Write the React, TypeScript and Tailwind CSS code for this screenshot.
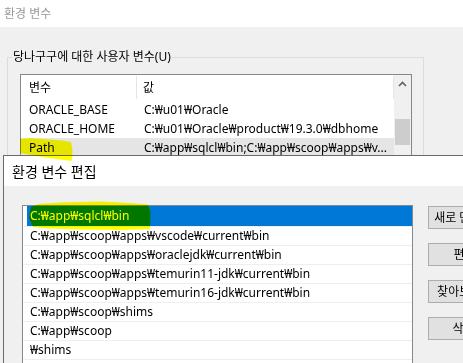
import React from "react";

const font = "font-['Noto_Sans','Noto_Sans_CJK_KR',sans-serif]";

const userVars = [
  { name: "ORACLE_BASE", value: "C:₩u01₩Oracle" },
  { name: "ORACLE_HOME", value: "C:₩u01₩Oracle₩product₩19.3.0₩dbhome" },
  { name: "Path", value: "C:₩app₩sqlcl₩bin;C:₩app₩scoop₩apps₩v...", selected: true },
];

const paths = [
  "C:₩app₩sqlcl₩bin",
  "C:₩app₩scoop₩apps₩vscode₩current₩bin",
  "C:₩app₩scoop₩apps₩oraclejdk₩current₩bin",
  "C:₩app₩scoop₩apps₩temurin11-jdk₩current₩bin",
  "C:₩app₩scoop₩apps₩temurin16-jdk₩current₩bin",
  "C:₩app₩scoop₩shims",
  "C:₩app₩scoop",
  "₩shims",
];

const buttons = ["새로 만들기(N)", "편집(E)", "찾아보기(B)...", "삭제(D)"];

function Highlights() {
  // 형광펜 자국 (multiply)
  return (
    <svg
      className="absolute left-0 top-0 pointer-events-none mix-blend-multiply"
      width="463"
      height="363"
    >
      <path
        d="M20 139 L30 138 L48 139.5 L62 140.5 L71 142 L72.5 150 L72 161 L60 159.5 L45 157.5 L32 155 L20 153 Z"
        fill="#ffff00"
      />
      <path
        d="M31 207 L38 204 L60 202.5 L100 201.5 L130 203 L148 204.5 L150.5 212 L150 229 L120 230 L80 229.5 L48 228.5 L33 227 L29 218 Z"
        fill="#ffff00"
      />
    </svg>
  );
}

export default function App() {
  return (
    <div className={`relative w-[463px] h-[363px] overflow-hidden bg-[#f0f0f0] text-[12px] text-black ${font}`}>
      {/* 환경 변수 (뒤 창) */}
      <div className="h-[27px] bg-white flex items-center pl-[4px] text-[#999999]">환경 변수</div>
      <div className="relative mt-[30px] ml-[7px] w-[417px] h-[400px] border border-[#dcdcdc] pt-[16px] pl-[12px]">
        <span className="absolute -top-[10px] left-[4px] px-[1px] bg-[#f0f0f0] leading-[18px]">
          당나구구에 대한 사용자 변수(U)
        </span>
        <div className="w-[392px] h-[200px] border border-[#828790] bg-white flex">
          <div className="flex-1">
            <div className="h-[25px] flex items-center">
              <div className="w-[116px] h-[23px] flex items-center pl-[8px] border-r border-[#e5e5e5]">변수</div>
              <div className="flex-1 h-[23px] flex items-center pl-[6px] border-r border-[#e5e5e5]">값</div>
            </div>
            {userVars.map((v) => (
              <div
                key={v.name}
                className={`h-[19px] flex items-center whitespace-nowrap ${v.selected ? "bg-[#e5e5e5]" : ""}`}
              >
                <div className="w-[116px] pl-[8px]">{v.name}</div>
                <div className="pl-[7px] overflow-hidden">{v.value}</div>
              </div>
            ))}
          </div>
          <div className="w-[17px] bg-[#f0f0f0] flex flex-col items-center">
            <svg width="17" height="17" viewBox="0 0 17 17" className="mt-[1px]">
              <path d="M5 10 L8.5 6.5 L12 10" fill="none" stroke="#606060" strokeWidth="1.6" />
            </svg>
            <div className="mt-[26px] w-[15px] h-[26px] bg-[#cdcdcd]" />
          </div>
        </div>
      </div>

      {/* 환경 변수 편집 (앞 창) */}
      <div className="absolute left-[3px] top-[155px] right-0 bottom-0 border-l border-t border-[#6a6a6a] bg-[#f0f0f0] flex flex-col">
        <div className="h-[30px] shrink-0 bg-white flex items-center pl-[8px] text-[14px]">환경 변수 편집</div>
        <div className="flex items-start shrink-0 mt-[19px] ml-[18px]">
          <div className="w-[391px] h-[200px] shrink-0 border border-[#828790] bg-white">
            {paths.map((p, i) => (
              <div
                key={p}
                className={`${i === 0 ? "h-[21px]" : "h-[19px]"} border-b border-[#efefef] flex`}
              >
                <div
                  className={`flex-1 flex items-center pl-[3px] ml-[4px] whitespace-nowrap ${
                    i === 0 ? "bg-[#0078d7] text-white" : ""
                  }`}
                >
                  {p}
                </div>
              </div>
            ))}
          </div>
          <div className="ml-[15px] mt-[1px] flex flex-col gap-[14px] shrink-0">
            {buttons.map((b) => (
              <div
                key={b}
                className="w-[87px] h-[23px] bg-[#e1e1e1] border border-[#adadad] flex items-center justify-center whitespace-nowrap"
              >
                {b}
              </div>
            ))}
          </div>
        </div>
      </div>

      <Highlights />
    </div>
  );
}
